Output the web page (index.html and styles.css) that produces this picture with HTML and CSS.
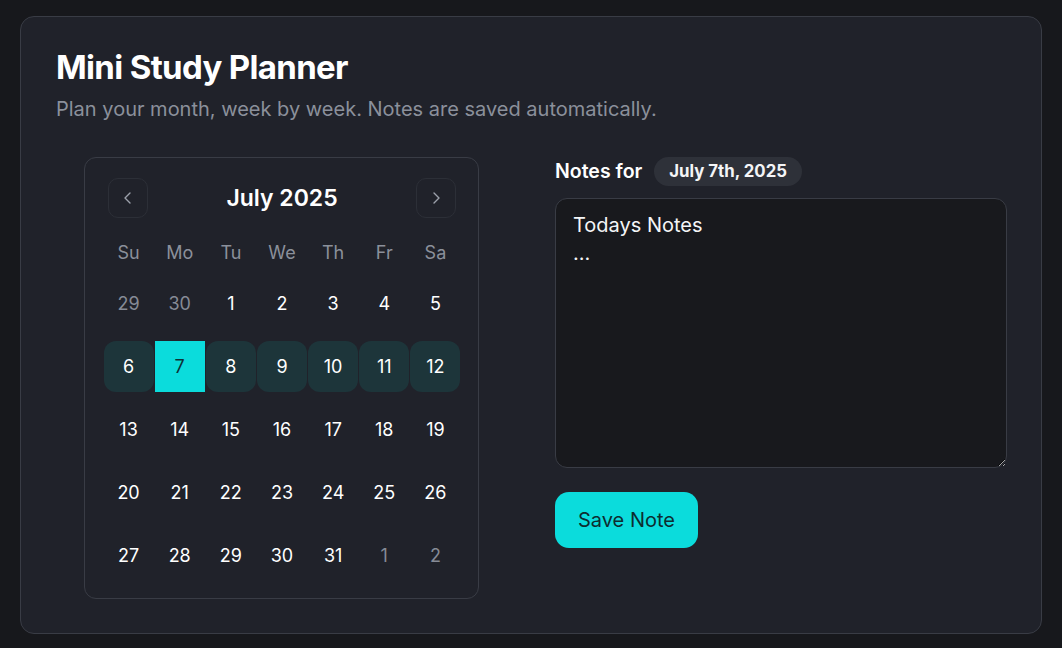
FILE: index.html
```html
<!DOCTYPE html>
<html>
<head>
<meta charset="utf-8">
<link rel="stylesheet" href="styles.css">
</head>
<body>
<main class="card">
  <header class="intro">
    <h1 class="title">Mini Study Planner</h1>
    <p class="subtitle">Plan your month, week by week. Notes are saved automatically.</p>
  </header>
  <div class="content">
    <section class="cal-col">
      <div class="calendar">
        <div class="cal-head">
          <button class="nav-btn" aria-label="Previous month">
            <svg width="16" height="16" viewBox="0 0 16 16"><path d="M10 3 5 8 10 13" fill="none" stroke="currentColor" stroke-width="1.4" stroke-linecap="round" stroke-linejoin="round"/></svg>
          </button>
          <div class="month">July 2025</div>
          <button class="nav-btn" aria-label="Next month">
            <svg width="16" height="16" viewBox="0 0 16 16"><path d="M6 3 11 8 6 13" fill="none" stroke="currentColor" stroke-width="1.4" stroke-linecap="round" stroke-linejoin="round"/></svg>
          </button>
        </div>
        <div class="weekdays">
          <span>Su</span><span>Mo</span><span>Tu</span><span>We</span><span>Th</span><span>Fr</span><span>Sa</span>
        </div>
        <div class="days">
          <div class="day muted">29</div><div class="day muted">30</div><div class="day">1</div><div class="day">2</div><div class="day">3</div><div class="day">4</div><div class="day">5</div>
          <div class="day week">6</div><div class="day week selected">7</div><div class="day week">8</div><div class="day week">9</div><div class="day week">10</div><div class="day week">11</div><div class="day week">12</div>
          <div class="day">13</div><div class="day">14</div><div class="day">15</div><div class="day">16</div><div class="day">17</div><div class="day">18</div><div class="day">19</div>
          <div class="day">20</div><div class="day">21</div><div class="day">22</div><div class="day">23</div><div class="day">24</div><div class="day">25</div><div class="day">26</div>
          <div class="day">27</div><div class="day">28</div><div class="day">29</div><div class="day">30</div><div class="day">31</div><div class="day muted">1</div><div class="day muted">2</div>
        </div>
      </div>
    </section>
    <section class="notes-col">
      <div class="notes-label">
        <span class="label-text">Notes for</span>
        <span class="date-badge">July 7th, 2025</span>
      </div>
      <textarea class="notes" spellcheck="false">Todays Notes
...</textarea>
      <div class="actions">
        <button class="save-btn">Save Note</button>
      </div>
    </section>
  </div>
</main>
</body>
</html>
```

FILE: styles.css
```css
* { box-sizing: border-box; }

html, body {
  margin: 0;
  background: #17181c;
}

body {
  padding: 16px 20px 15px;
  font-family: Inter, "Noto Sans", sans-serif;
  color: #f4f5f7;
}

.card {
  background: #20222a;
  border: 1px solid #393c45;
  border-radius: 14px;
  padding: 31px 35px 34px;
  min-height: 617px;
}

.title {
  margin: 0;
  font-size: 33px;
  font-weight: 700;
  letter-spacing: -0.02em;
  line-height: 1.2;
  color: #ffffff;
}

.subtitle {
  margin: 7px 0 0;
  font-size: 20px;
  line-height: 1.4;
  color: #8b909b;
}

.content {
  display: grid;
  grid-template-columns: 451px 451px;
  column-gap: 48px;
  margin-top: 34px;
}

.cal-col {
  display: flex;
  justify-content: center;
}

.calendar {
  width: 395px;
  border: 1px solid #393c45;
  border-radius: 12px;
  padding: 20px 17px 17px 18px;
}

.cal-head {
  display: flex;
  align-items: center;
  justify-content: space-between;
  padding: 0 5px;
  height: 40px;
}

.nav-btn {
  width: 40px;
  height: 40px;
  border-radius: 10px;
  border: 1px solid #2c2f37;
  background: #20222a;
  color: #9ca1ab;
  display: flex;
  align-items: center;
  justify-content: center;
  padding: 0;
}

.month {
  font-size: 23px;
  font-weight: 600;
  color: #ffffff;
}

.weekdays {
  display: grid;
  grid-template-columns: repeat(7, 1fr);
  margin-top: 21px;
  height: 27px;
  align-items: center;
  text-align: center;
  font-size: 18px;
  color: #8b909b;
}

.days {
  display: grid;
  grid-template-columns: repeat(7, 1fr);
  grid-auto-rows: 51px;
  row-gap: 12px;
  margin-top: 12px;
}

.day {
  display: flex;
  align-items: center;
  justify-content: center;
  font-size: 18px;
  color: #ffffff;
  border-radius: 12px;
  margin: 0 0.5px;
}

.day.muted { color: #868b96; }

.day.week { background: #1d353a; }

.day.selected {
  background: #0bdcdc;
  color: #0d3236;
  border-radius: 0;
}

.notes-label {
  display: flex;
  align-items: center;
  gap: 12px;
  height: 29px;
}

.label-text {
  font-size: 19.5px;
  font-weight: 600;
  color: #ffffff;
}

.date-badge {
  background: #2e3139;
  border-radius: 15px;
  height: 29px;
  padding: 0 15px;
  display: flex;
  align-items: center;
  font-size: 16.8px;
  font-weight: 700;
  color: #f4f5f7;
}

.notes {
  display: block;
  width: 452px;
  height: 270px;
  margin-top: 12px;
  background: #18191d;
  border: 1px solid #393c45;
  border-radius: 12px;
  padding: 12px 17px;
  font-family: Inter, "Noto Sans", sans-serif;
  font-size: 20px;
  line-height: 1.42;
  color: #f4f5f7;
  resize: vertical;
  outline: none;
}

.actions {
  margin-top: 24px;
}

.save-btn {
  height: 56px;
  padding: 0 23px;
  border: none;
  border-radius: 14px;
  background: #0bdcdc;
  color: #0d2d30;
  font-family: Inter, "Noto Sans", sans-serif;
  font-size: 20px;
  font-weight: 400;
}
```
